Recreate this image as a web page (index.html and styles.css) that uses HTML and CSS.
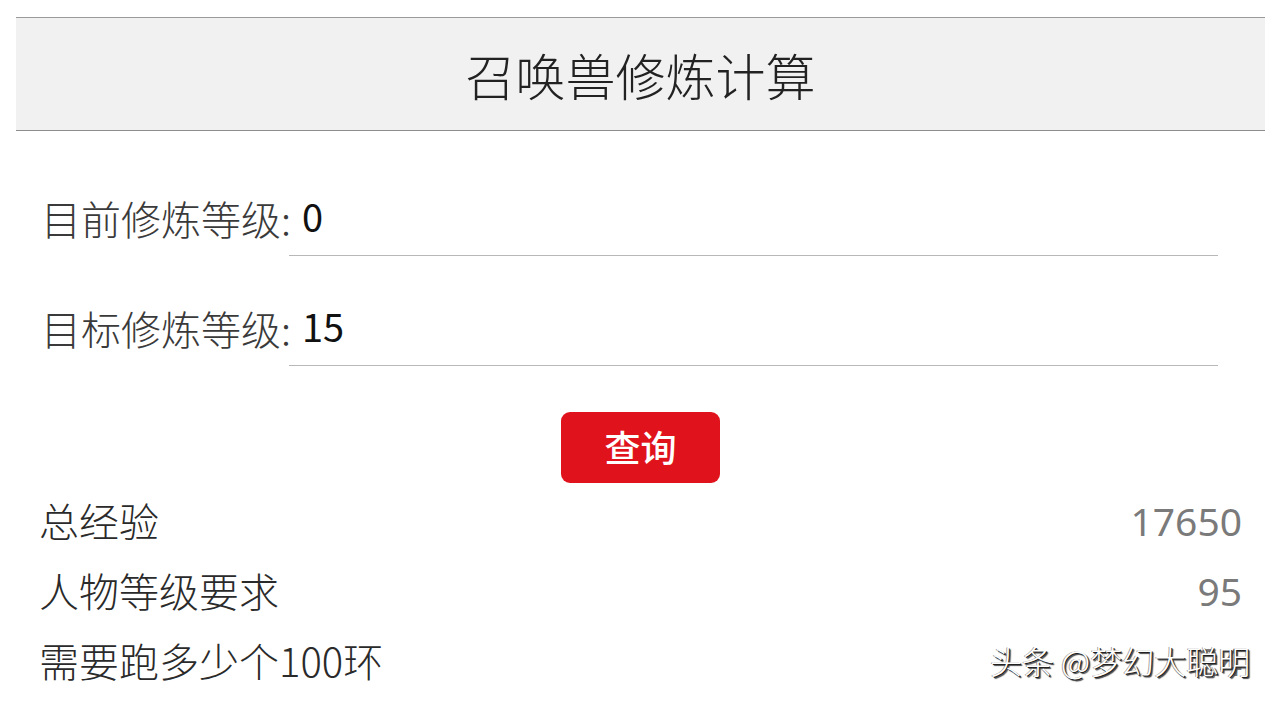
FILE: index.html
```html
<!DOCTYPE html>
<html lang="zh">
<head>
<meta charset="utf-8">
<title>召唤兽修炼计算</title>
<link rel="stylesheet" href="styles.css">
</head>
<body>
<div class="page">
  <header class="header">
    <h1 class="title">召唤兽修炼计算</h1>
  </header>
  <section class="form">
    <div class="row row-first">
      <span class="label">目前修炼等级:</span>
      <div class="field">0</div>
    </div>
    <div class="row row-second">
      <span class="label">目标修炼等级:</span>
      <div class="field">15</div>
    </div>
    <div class="actions">
      <button class="btn">查询</button>
    </div>
  </section>
  <section class="results">
    <div class="result"><span class="rlabel">总经验</span><span class="rvalue">17650</span></div>
    <div class="result"><span class="rlabel">人物等级要求</span><span class="rvalue">95</span></div>
    <div class="result"><span class="rlabel">需要跑多少个100环</span><span class="rvalue">24</span></div>
  </section>
  <div class="watermark">头条 @梦幻大聪明</div>
</div>
</body>
</html>
```
FILE: styles.css
```css
html, body {
  margin: 0;
  padding: 0;
  background: #ffffff;
}
body {
  font-family: "Noto Sans CJK SC", "Noto Sans", sans-serif;
  width: 1278px;
  height: 704px;
  overflow: hidden;
}
.page {
  position: relative;
  width: 1278px;
  height: 704px;
  padding-top: 17px;
  box-sizing: border-box;
}
.header {
  margin: 0 13px 0 16px;
  height: 112px;
  background: #f1f1f2;
  border-top: 1px solid #9a9a9a;
  border-bottom: 1px solid #8c8c8c;
  display: flex;
  align-items: center;
  justify-content: center;
}
.title {
  margin: 0;
  font-size: 50px;
  font-weight: 300;
  color: #222222;
  line-height: 1;
  letter-spacing: 0;
}
.form {
  padding-left: 41px;
  padding-right: 60px;
}
.row {
  display: flex;
  align-items: center;
  height: 66px;
}
.row-first {
  margin-top: 59px;
}
.row-second {
  margin-top: 44px;
}
.label {
  flex: none;
  width: 248px;
  font-size: 40px;
  font-weight: 300;
  color: #3a3a3a;
  line-height: 1;
  white-space: nowrap;
  padding-bottom: 10px;
}
.field {
  flex: 1;
  height: 65px;
  border-bottom: 1px solid #b8b8b8;
  font-size: 38px;
  font-weight: 400;
  color: #111111;
  line-height: 1;
  display: flex;
  align-items: center;
  padding-left: 13px;
  padding-bottom: 14px;
  box-sizing: border-box;
}
.actions {
  display: flex;
  justify-content: center;
  margin-top: 46px;
  padding-left: 22px;
}
.btn {
  width: 159px;
  height: 71px;
  background: #e0131d;
  border: none;
  border-radius: 9px;
  color: #ffffff;
  font-family: "Noto Sans CJK SC", sans-serif;
  font-size: 36px;
  font-weight: 500;
  padding: 0 0 4px 0;
  line-height: 1;
}
.results {
  padding-left: 39px;
  padding-right: 36px;
  margin-top: 2px;
}
.result {
  display: flex;
  justify-content: space-between;
  align-items: center;
  height: 70px;
}
.rlabel {
  font-size: 40px;
  font-weight: 300;
  color: #2a2a2a;
  line-height: 1;
}
.rvalue {
  font-size: 39px;
  font-weight: 400;
  color: #7a7a7a;
  line-height: 1;
  font-family: "Noto Sans", "Noto Sans CJK SC", sans-serif;
}
.watermark {
  position: absolute;
  left: 990px;
  top: 641px;
  font-size: 32px;
  font-weight: 300;
  line-height: 1.2;
  color: #ffffff;
  white-space: nowrap;
  text-shadow: 1px 1px 0 #222, 2px 2px 1px #444, -1px 0 0 rgba(0,0,0,0.4);
}
```
